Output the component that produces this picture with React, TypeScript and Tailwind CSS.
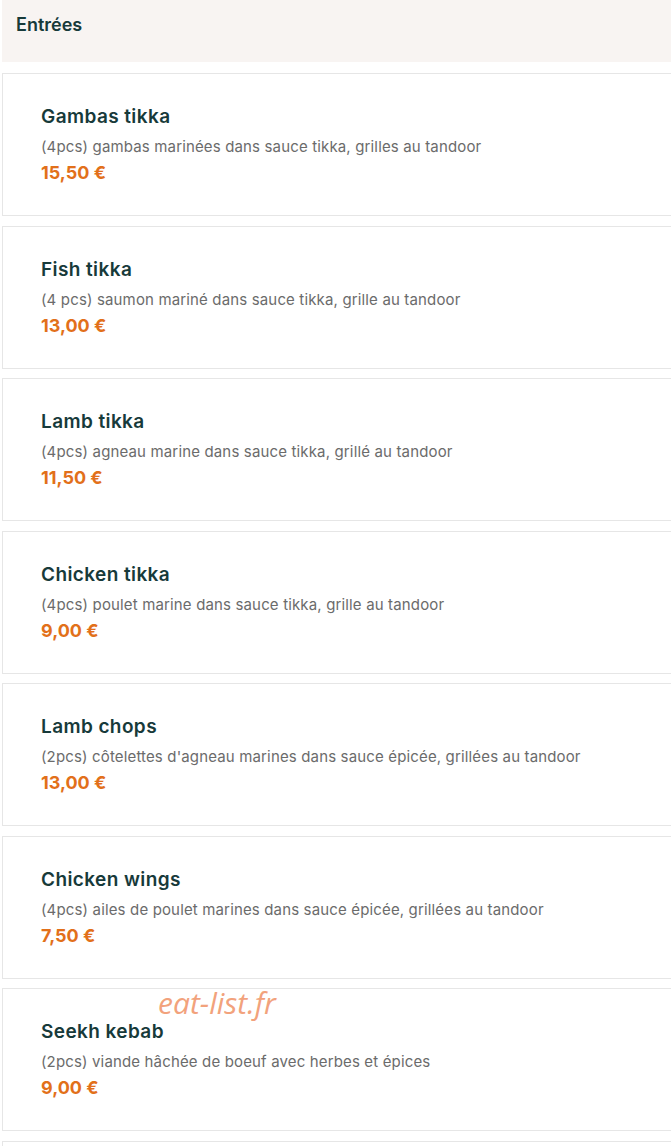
const items = [
  { name: "Gambas tikka", desc: "(4pcs) gambas marinées dans sauce tikka, grilles au tandoor", price: "15,50 €" },
  { name: "Fish tikka", desc: "(4 pcs) saumon mariné dans sauce tikka, grille au tandoor", price: "13,00 €" },
  { name: "Lamb tikka", desc: "(4pcs) agneau marine dans sauce tikka, grillé au tandoor", price: "11,50 €" },
  { name: "Chicken tikka", desc: "(4pcs) poulet marine dans sauce tikka, grille au tandoor", price: "9,00 €" },
  { name: "Lamb chops", desc: "(2pcs) côtelettes d'agneau marines dans sauce épicée, grillées au tandoor", price: "13,00 €" },
  { name: "Chicken wings", desc: "(4pcs) ailes de poulet marines dans sauce épicée, grillées au tandoor", price: "7,50 €" },
  { name: "Seekh kebab", desc: "(2pcs) viande hâchée de boeuf avec herbes et épices", price: "9,00 €" },
  { name: "", desc: "", price: "" },
];

function MenuCard({ name, desc, price }: { name: string; desc: string; price: string }) {
  return (
    <div className="ml-[2px] w-[680px] h-[143px] border border-[#e6e6e6] bg-white pl-[38px] pt-[31px] shrink-0">
      <h3 className="text-[19px] leading-[24px] font-semibold tracking-[0.4px] text-[#173a3a]">{name}</h3>
      <p className="mt-[8px] text-[15px] leading-[20px] tracking-[0.15px] text-[#6b6b6b]">{desc}</p>
      <p className="mt-[5px] text-[18px] leading-[22px] font-bold text-[#e2701a]">{price}</p>
    </div>
  );
}

export default function App() {
  return (
    <div className="relative w-[671px] h-[1146px] overflow-hidden bg-white font-['Inter',sans-serif]">
      <div className="ml-[2px] h-[62px] bg-[#f8f4f2] px-[14px] pt-[13px]">
        <h2 className="text-[18px] leading-[24px] font-semibold text-[#173a3a]">Entrées</h2>
      </div>
      <div className="flex flex-col gap-[9.5px] pt-[11px]">
        {items.map((it, i) => (
          <MenuCard key={i} {...it} />
        ))}
      </div>
      <span className="absolute left-[158px] top-[980px] text-[30px] italic text-[#f2a27c] font-['Open_Sans',sans-serif]">
        eat-list.fr
      </span>
    </div>
  );
}
